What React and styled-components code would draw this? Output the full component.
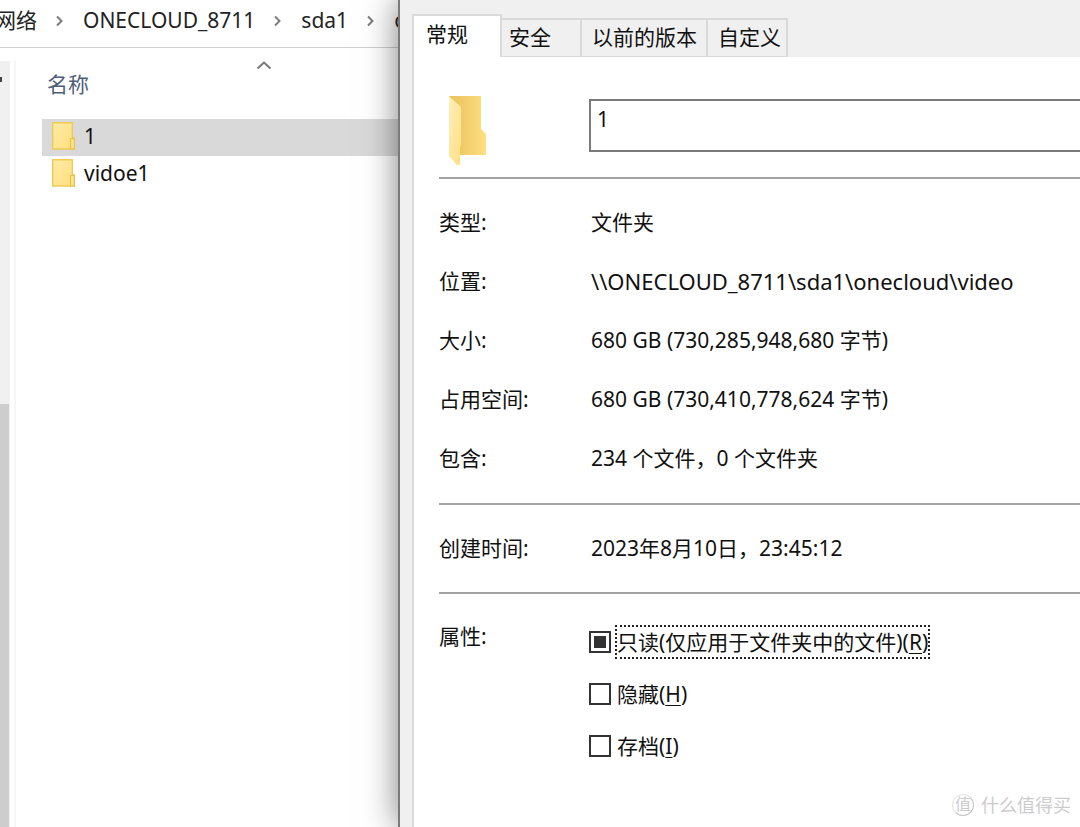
import React, { useEffect, useRef } from "react";
import styled, { createGlobalStyle } from "styled-components";

const GlobalStyle = createGlobalStyle`
  *, *::before, *::after { box-sizing: border-box; }
  body {
    margin: 0;
    background: #fff;
    color: #111;
    font-family: "Noto Sans", "Noto Sans CJK SC", sans-serif;
    font-size: 21px;
    line-height: 30px;
  }
  button, input { font: inherit; color: inherit; }
`;

const Desktop = styled.div`
  display: grid;
  grid-template-columns: minmax(0, 398fr) minmax(0, 682fr);
  min-height: 100vh;
  overflow: hidden;
`;

const Explorer = styled.section`
  display: flex;
  flex-direction: column;
  overflow: hidden;
`;

const AddressBar = styled.nav`
  display: flex;
  align-items: center;
  height: 48px;
  margin-left: -5px;
  padding-bottom: 7px;
  border-bottom: 1px solid #d0d0d0;
  white-space: nowrap;
`;

const Crumb = styled.a`
  color: #222;
  text-decoration: none;
`;

const CrumbArrow = styled.svg`
  flex: none;
  width: 9px;
  height: 12px;
  margin: 2px 19px 0 18px;
  fill: none;
  stroke: #7d7d7d;
  stroke-width: 2;
`;

const Browser = styled.div`
  flex: 1;
  display: flex;
  padding-top: 13px;
`;

const ScrollTrack = styled.div`
  flex: none;
  display: flex;
  flex-direction: column;
  width: 10px;
  background: #f0f0f0;
`;

const TrackSpace = styled.div`
  flex: 343 1 0;

  &::before {
    content: "";
    display: block;
    width: 2px;
    height: 5px;
    margin-top: 16px;
    background: #444;
  }
`;

const ScrollThumb = styled.div`
  flex: 423 1 0;
  width: 9px;
  background: #cdcdcd;
`;

const FileList = styled.div`
  flex: 1;
  min-width: 0;
  margin-left: 4px;
  padding-left: 26px;
  border-left: 2px solid #f6f6f6;
`;

const SortArrow = styled.svg`
  display: block;
  width: 16px;
  height: 8px;
  margin-left: 214px;
  fill: none;
  stroke: #777;
  stroke-width: 2;
`;

const ColumnHeader = styled.button`
  display: block;
  height: 50px;
  padding: 0 5px 20px;
  border: 0;
  background: none;
  color: #4c607a;
`;

const FileItem = styled.div`
  display: flex;
  align-items: center;
  gap: 8px;
  height: 37px;
  padding: 0 0 3px 10px;
  background: ${(p) => (p.$selected ? "#d9d9d9" : "transparent")};
  color: #111;
`;

const Dialog = styled.section`
  position: relative;
  display: flex;
  flex-direction: column;
  padding: 14px 0 0 12px;
  border-left: 2px solid #7a7a7a;
  background: #f0f0f0;
  box-shadow: 0 0 32px rgba(0, 0, 0, 0.5);
`;

const Tabs = styled.div`
  display: flex;
  align-items: flex-end;
  height: 43px;
`;

const Tab = styled.button`
  flex: none;
  position: relative;
  width: ${(p) => p.$width}px;
  height: ${(p) => (p.$active ? 43 : 39)}px;
  padding: 0 0 ${(p) => (p.$active ? 6 : 2)}px ${(p) => p.$indent}px;
  border: solid #dadada;
  border-width: ${(p) => (p.$active ? "2px 2px 0 2px" : "2px 2px 1px 0")};
  background: ${(p) => (p.$active ? "#fff" : "#f0f0f0")};
  text-align: left;
  white-space: nowrap;
`;

const Sheet = styled.div`
  flex: 1;
  padding: 38px 0 0 25px;
  border-left: 2px solid #dadada;
  background: #fff;
`;

const NameRow = styled.div`
  display: grid;
  grid-template-columns: 150px 1fr;
  height: 84px;
  border-bottom: 2px solid #a3a3a3;
  margin-bottom: 13px;
`;

const NameInput = styled.input`
  width: 100%;
  height: 53px;
  margin-top: 4px;
  padding: 0 6px 13px;
  border: 2px solid #7a7a7a;
  border-right: 0;
  border-radius: 0;
  outline: 0;
  background: #fff;
`;

const Properties = styled.dl`
  display: grid;
  grid-template-columns: 152px 1fr;
  grid-auto-rows: ${(p) => p.$rowHeight}px;
  align-items: center;
  margin: 0;
  padding-bottom: ${(p) => p.$space}px;
  border-bottom: 2px solid #a3a3a3;
  white-space: nowrap;
`;

const Term = styled.dt``;

const Value = styled.dd`
  margin: 0;
  font-size: ${(p) => (p.$path ? 22 : 21)}px;
`;

const Attributes = styled.fieldset`
  display: grid;
  grid-template-columns: 150px 1fr;
  margin: 0;
  padding: 27px 0 0;
  border: 0;
`;

const Options = styled.div`
  display: grid;
  justify-items: start;
  gap: 18px;
  padding-top: 4px;
`;

const Option = styled.label`
  display: flex;
  align-items: center;
  gap: 6px;
  height: 34px;
  white-space: nowrap;
`;

const Box = styled.input`
  appearance: none;
  display: grid;
  place-items: center;
  flex: none;
  width: 22px;
  height: 22px;
  margin: 0;
  border: 2px solid #333;
  background: #fff;

  &:indeterminate::before {
    content: "";
    width: 12px;
    height: 12px;
    background: #333;
  }
`;

const OptionText = styled.span`
  outline: ${(p) => (p.$focused ? "2px dotted #222" : "none")};

  u {
    text-underline-offset: 3px;
    text-decoration-thickness: 1px;
  }
`;

const Watermark = styled.div`
  position: absolute;
  right: 9px;
  bottom: 8px;
  display: flex;
  align-items: center;
  gap: 7px;
  color: #cccccc;
  font-size: 18px;
  line-height: 28px;
`;

const Seal = styled.span`
  width: 22px;
  height: 22px;
  border: 1px solid #e4e4e4;
  border-right-color: #c4c4c4;
  border-bottom-color: #c4c4c4;
  border-radius: 50%;
  font-size: 16px;
  line-height: 19px;
  text-align: center;
`;

function Arrow() {
  return (
    <CrumbArrow viewBox="0 0 9 12" aria-hidden="true">
      <path d="M2 1.5 6.5 6 2 10.5" />
    </CrumbArrow>
  );
}

function SmallFolder() {
  return (
    <svg width="24" height="28" viewBox="0 0 24 28" aria-hidden="true">
      <defs>
        <linearGradient id="small" x1="0" y1="0" x2="1" y2="1">
          <stop offset="0" stopColor="#ffeaa6" />
          <stop offset="1" stopColor="#ffe07d" />
        </linearGradient>
      </defs>
      <path d="M.7.7H20.3V16H22.3V27H.7Z" fill="url(#small)" stroke="#edca55" strokeWidth="1.4" />
      <path d="M18.5 27V16.5H22.3V27Z" fill="#ffe48f" stroke="#e8c14c" strokeWidth="1.2" />
    </svg>
  );
}

function LargeFolder() {
  return (
    <svg width="50" height="72" viewBox="-10 0 50 72" aria-hidden="true">
      <defs>
        <linearGradient id="back">
          <stop offset="0" stopColor="#e7c25d" />
          <stop offset="0.35" stopColor="#efcb68" />
          <stop offset="1" stopColor="#ffdf80" />
        </linearGradient>
        <linearGradient id="front" x1="0" y1="0" x2="1" y2="1">
          <stop offset="0" stopColor="#ffeeb8" />
          <stop offset="1" stopColor="#ffdf84" />
        </linearGradient>
      </defs>
      <path d="M0 1H32V34L37 39V60H0Z" fill="url(#back)" />
      <path d="M0 1 12 12V50L11 52V70H8L0 61Z" fill="url(#front)" />
    </svg>
  );
}

function Check({ name, accessKey, mixed }) {
  const box = useRef(null);
  useEffect(() => {
    box.current.indeterminate = Boolean(mixed);
  }, [mixed]);
  return (
    <Option>
      <Box ref={box} type="checkbox" />
      <OptionText $focused={mixed}>
        {name}(<u>{accessKey}</u>)
      </OptionText>
    </Option>
  );
}

const crumbs = ["网络", "ONECLOUD_8711", "sda1", "o"];

const tabs = [
  { name: "常规", width: 90, indent: 12, active: true },
  { name: "安全", width: 80, indent: 7 },
  { name: "以前的版本", width: 126, indent: 10 },
  { name: "自定义", width: 80, indent: 10 },
];

const details = [
  { term: "类型:", value: "文件夹" },
  { term: "位置:", value: "\\\\ONECLOUD_8711\\sda1\\onecloud\\video", path: true },
  { term: "大小:", value: "680 GB (730,285,948,680 字节)" },
  { term: "占用空间:", value: "680 GB (730,410,778,624 字节)" },
  { term: "包含:", value: "234 个文件，0 个文件夹" },
];

export default function App() {
  return (
    <>
      <GlobalStyle />
      <Desktop>
        <Explorer>
          <AddressBar>
            {crumbs.map((crumb, i) => (
              <React.Fragment key={crumb}>
                {i > 0 && <Arrow />}
                <Crumb href="#">{crumb}</Crumb>
              </React.Fragment>
            ))}
          </AddressBar>
          <Browser>
            <ScrollTrack>
              <TrackSpace />
              <ScrollThumb />
            </ScrollTrack>
            <FileList>
              <SortArrow viewBox="0 0 16 8" aria-hidden="true">
                <path d="M1.5 7.5 8 1.5 14.5 7.5" />
              </SortArrow>
              <ColumnHeader type="button">名称</ColumnHeader>
              <FileItem $selected>
                <SmallFolder />1
              </FileItem>
              <FileItem>
                <SmallFolder />vidoe1
              </FileItem>
            </FileList>
          </Browser>
        </Explorer>
        <Dialog role="dialog">
          <Tabs role="tablist">
            {tabs.map((t) => (
              <Tab
                key={t.name}
                type="button"
                role="tab"
                aria-selected={Boolean(t.active)}
                $active={t.active}
                $width={t.width}
                $indent={t.indent}
              >
                {t.name}
              </Tab>
            ))}
          </Tabs>
          <Sheet>
            <NameRow>
              <LargeFolder />
              <NameInput type="text" defaultValue="1" aria-label="名称" />
            </NameRow>
            <Properties $rowHeight={59} $space={16}>
              {details.map(({ term, value, path }) => (
                <React.Fragment key={term}>
                  <Term>{term}</Term>
                  <Value $path={path}>{value}</Value>
                </React.Fragment>
              ))}
            </Properties>
            <Properties $rowHeight={85} $space={2}>
              <Term>创建时间:</Term>
              <Value>2023年8月10日，23:45:12</Value>
            </Properties>
            <Attributes>
              <span>属性:</span>
              <Options>
                <Check name="只读(仅应用于文件夹中的文件)" accessKey="R" mixed />
                <Check name="隐藏" accessKey="H" />
                <Check name="存档" accessKey="I" />
              </Options>
            </Attributes>
          </Sheet>
          <Watermark>
            <Seal>值</Seal>
            什么值得买
          </Watermark>
        </Dialog>
      </Desktop>
    </>
  );
}
